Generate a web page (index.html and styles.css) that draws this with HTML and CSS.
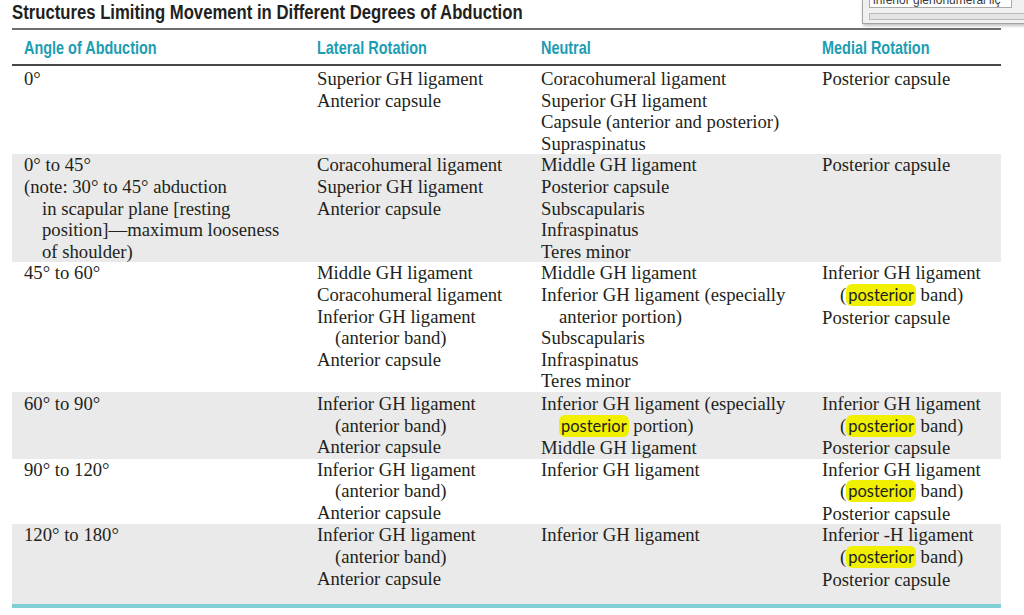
FILE: index.html
```html
<!DOCTYPE html>
<html lang="en">
<head>
<meta charset="utf-8">
<title>Structures Limiting Movement in Different Degrees of Abduction</title>
<link rel="stylesheet" href="styles.css">
</head>
<body>
<div class="page">
  <h1 class="title"><span class="title-text">Structures Limiting Movement in Different Degrees of Abduction</span></h1>
  <table class="grid">
    <colgroup>
      <col class="c1"><col class="c2"><col class="c3"><col class="c4">
    </colgroup>
    <thead>
      <tr>
        <th><span class="hd">Angle of Abduction</span></th>
        <th><span class="hd">Lateral Rotation</span></th>
        <th><span class="hd">Neutral</span></th>
        <th><span class="hd">Medial Rotation</span></th>
      </tr>
    </thead>
    <tbody>
      <tr class="row first">
        <td><div class="ln">0°</div></td>
        <td><div class="ln">Superior GH ligament</div><div class="ln">Anterior capsule</div></td>
        <td><div class="ln">Coracohumeral ligament</div><div class="ln">Superior GH ligament</div><div class="ln">Capsule (anterior and posterior)</div><div class="ln">Supraspinatus</div></td>
        <td><div class="ln">Posterior capsule</div></td>
      </tr>
      <tr class="row shade">
        <td><div class="ln">0° to 45°</div><div class="ln">(note: 30° to 45° abduction</div><div class="ln ind">in scapular plane [resting</div><div class="ln ind">position]—maximum looseness</div><div class="ln ind">of shoulder)</div></td>
        <td><div class="ln">Coracohumeral ligament</div><div class="ln">Superior GH ligament</div><div class="ln">Anterior capsule</div></td>
        <td><div class="ln">Middle GH ligament</div><div class="ln">Posterior capsule</div><div class="ln">Subscapularis</div><div class="ln">Infraspinatus</div><div class="ln">Teres minor</div></td>
        <td><div class="ln">Posterior capsule</div></td>
      </tr>
      <tr class="row">
        <td><div class="ln">45° to 60°</div></td>
        <td><div class="ln">Middle GH ligament</div><div class="ln">Coracohumeral ligament</div><div class="ln">Inferior GH ligament</div><div class="ln ind">(anterior band)</div><div class="ln">Anterior capsule</div></td>
        <td><div class="ln">Middle GH ligament</div><div class="ln">Inferior GH ligament (especially</div><div class="ln ind">anterior portion)</div><div class="ln">Subscapularis</div><div class="ln">Infraspinatus</div><div class="ln">Teres minor</div></td>
        <td><div class="ln">Inferior GH ligament</div><div class="ln ind">(<mark class="hl">posterior</mark> band)</div><div class="ln">Posterior capsule</div></td>
      </tr>
      <tr class="row shade gap">
        <td><div class="ln">60° to 90°</div></td>
        <td><div class="ln">Inferior GH ligament</div><div class="ln ind">(anterior band)</div><div class="ln">Anterior capsule</div></td>
        <td><div class="ln">Inferior GH ligament (especially</div><div class="ln ind"><mark class="hl">posterior</mark> portion)</div><div class="ln">Middle GH ligament</div></td>
        <td><div class="ln">Inferior GH ligament</div><div class="ln ind">(<mark class="hl">posterior</mark> band)</div><div class="ln">Posterior capsule</div></td>
      </tr>
      <tr class="row">
        <td><div class="ln">90° to 120°</div></td>
        <td><div class="ln">Inferior GH ligament</div><div class="ln ind">(anterior band)</div><div class="ln">Anterior capsule</div></td>
        <td><div class="ln">Inferior GH ligament</div></td>
        <td><div class="ln">Inferior GH ligament</div><div class="ln ind">(<mark class="hl">posterior</mark> band)</div><div class="ln">Posterior capsule</div></td>
      </tr>
      <tr class="row shade last">
        <td><div class="ln">120° to 180°</div></td>
        <td><div class="ln">Inferior GH ligament</div><div class="ln ind">(anterior band)</div><div class="ln">Anterior capsule</div></td>
        <td><div class="ln">Inferior GH ligament</div></td>
        <td><div class="ln">Inferior -H ligament</div><div class="ln ind">(<mark class="hl">posterior</mark> band)</div><div class="ln">Posterior capsule</div></td>
      </tr>
    </tbody>
  </table>
</div>
<div class="popup">
  <div class="popup-field">inferior glenohumeral liç</div>
  <div class="popup-bar"></div>
</div>
</body>
</html>
```
FILE: styles.css
```css
html, body {
  margin: 0;
  padding: 0;
  background: #ffffff;
}
.page {
  padding: 0 23px 0 12px;
  width: 989px;
}
.title {
  margin: 0;
  height: 28px;
  border-bottom: 2px solid #6e6e6e;
  font-family: "Liberation Sans", Arial, sans-serif;
  font-weight: bold;
  font-size: 20px;
  line-height: 24px;
  color: #231f20;
  white-space: nowrap;
}
.title-text {
  display: inline-block;
  transform: scaleX(0.835);
  transform-origin: 0 0;
}
.grid {
  width: 989px;
  table-layout: fixed;
  border-collapse: collapse;
  border-spacing: 0;
  font-family: "Liberation Serif", "Times New Roman", serif;
  font-size: 18.7px;
  line-height: 21.6px;
  color: #231f20;
  border-bottom: 4px solid #7fcfd5;
}
.c1 { width: 293px; }
.c2 { width: 224px; }
.c3 { width: 281px; }
.c4 { width: 191px; }
.grid thead th {
  height: 32px;
  padding: 0 0 0 12px;
  text-align: left;
  vertical-align: top;
  border-bottom: 2px solid #484848;
  font-family: "Liberation Sans", Arial, sans-serif;
  font-weight: bold;
  font-size: 19px;
  line-height: 32px;
  color: #1b9db2;
  white-space: nowrap;
}
.hd {
  display: inline-block;
  transform: scaleX(0.76);
  transform-origin: 0 50%;
  padding-top: 2px;
}
.grid td {
  padding: 0 0 0 12px;
  vertical-align: top;
}
.row.first td { padding-top: 2px; }
.row.gap td { padding-top: 1px; }
.row.last td { padding-bottom: 14px; }
.row.shade td { background: #eaeaea; }
.ln {
  white-space: nowrap;
}
.ln.ind {
  padding-left: 18px;
}
.hl {
  font-family: Lato, "Noto Sans", sans-serif;
  font-size: 16.5px;
  color: #231f20;
  background: #f0f000;
  border-radius: 6px;
  padding: 1px 2px;
}
.popup {
  position: absolute;
  top: 0;
  left: 862px;
  width: 170px;
  height: 23px;
  background: #f0f0f0;
  border-left: 1px solid #a3a3a3;
  border-bottom: 1px solid #a3a3a3;
  box-shadow: 1px 2px 3px rgba(0, 0, 0, 0.25);
  overflow: hidden;
}
.popup-field {
  position: absolute;
  top: -8px;
  left: 6px;
  width: 138px;
  height: 14px;
  background: #ffffff;
  border: 1px solid #a9a9a9;
  font-family: "Liberation Sans", Arial, sans-serif;
  font-size: 12px;
  line-height: 14px;
  color: #3a3a3a;
  padding-left: 3px;
  white-space: nowrap;
  overflow: hidden;
}
.popup-bar {
  position: absolute;
  top: 13px;
  left: 6px;
  right: 0;
  height: 5px;
  background: #e4e4e4;
  border: 1px solid #b9b9b9;
}
```
